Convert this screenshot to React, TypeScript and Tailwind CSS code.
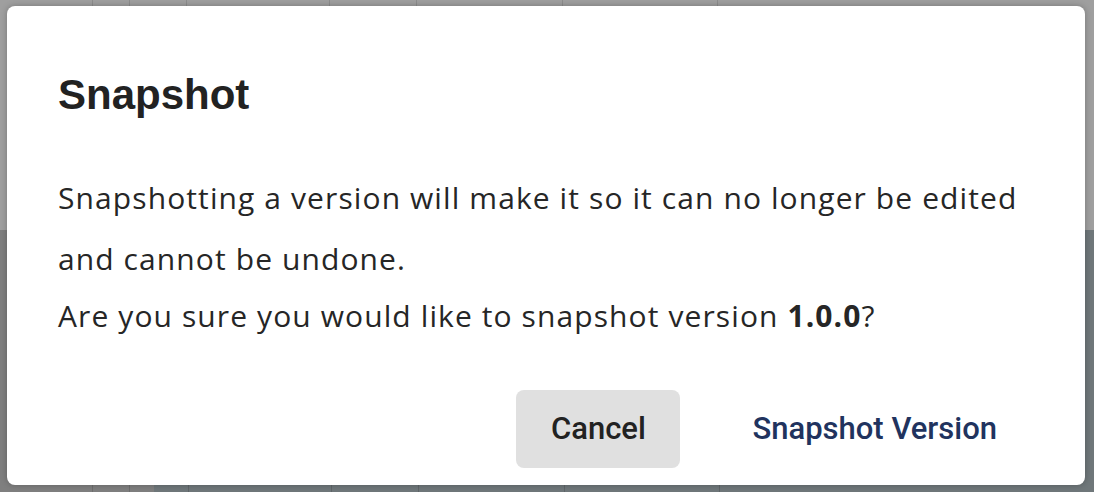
import React from "react";

const cols = [94, 38, 58, 144, 88, 147, 156];

function Backdrop() {
  return (
    <div className="flex h-full flex-col">
      {/* upper part of the page behind the dialog */}
      <div className="flex h-[230px] bg-[#9f9f9f]">
        {cols.map((w, i) => (
          <div key={i} className="h-full border-r border-[#8c8c8c]" style={{ width: w - 1 }} />
        ))}
        <div className="flex-1" />
      </div>
      {/* lower part */}
      <div className="flex flex-1 bg-[#6f777a]">
        <div className="flex w-[154px] bg-[#7f7f7f]">
          <div className="w-[93px] border-r border-[#6e6e6e]" />
          <div className="w-[37px] border-r border-[#6e6e6e]" />
        </div>
        <div className="w-[35px] border-r border-[#5f6568]" />
        <div className="w-[143px] border-r border-[#5f6568]" />
        <div className="w-[87px] border-r border-[#5f6568]" />
        <div className="w-[146px] border-r border-[#5f6568]" />
        <div className="w-[155px] border-r border-[#5f6568]" />
        <div className="flex-1" />
      </div>
    </div>
  );
}

export default function App() {
  return (
    <div className="relative h-[492px] w-[1094px] overflow-hidden">
      <Backdrop />

      <div className="absolute left-[7px] top-[6px] flex w-[1078px] flex-col rounded-lg bg-white pb-[17px] pl-[51px] pr-[51px] pt-[68px] shadow-[0_0_6px_rgba(0,0,0,0.25)]">
        <h2
          className="text-[42px] font-bold leading-[42px] text-[#222222]"
          style={{ fontFamily: '"Liberation Sans", Arial, sans-serif' }}
        >
          Snapshot
        </h2>

        <div
          className="mt-[51px] text-[30px] tracking-[1.1px] text-[#262626]"
          style={{ fontFamily: '"Open Sans", sans-serif' }}
        >
          <p className="leading-[61px]">
            Snapshotting a version will make it so it can no longer be edited and cannot be undone.
          </p>
          <p className="leading-[53px]">
            Are you sure you would like to snapshot version <span className="font-bold">1.0.0</span>?
          </p>
        </div>

        <div
          className="mt-[48px] flex justify-end gap-[35px]"
          style={{ fontFamily: 'Roboto, "Liberation Sans", sans-serif' }}
        >
          <button className="flex h-[78px] w-[164px] items-center justify-center rounded-lg bg-[#e0e0e0] text-[31px] font-medium text-[#222222]">
            Cancel
          </button>
          <button className="flex h-[78px] items-center px-[37px] text-[31px] font-medium text-[#21335e]">
            Snapshot Version
          </button>
        </div>
      </div>
    </div>
  );
}
